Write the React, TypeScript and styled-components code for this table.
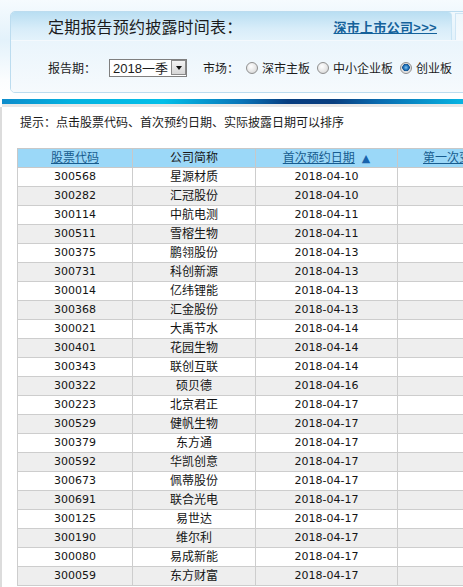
import React from "react";
import styled, { createGlobalStyle } from "styled-components";

const Global = createGlobalStyle`
  html, body { margin: 0; padding: 0; overflow: hidden; background: #fff; }
  body { font-family: "Liberation Sans", "Noto Sans CJK SC", sans-serif; color: #1a1a1a; }
`;

const Page = styled.div`
  width: 463px;
  height: 587px;
  overflow: hidden;
  display: flex;
  flex-direction: column;
`;

const Top = styled.div`
  padding: 11px 0 6px 10px;
  background: linear-gradient(#f6fbfe 0px, #e3f2fb 40px, #fbfdfe 80px, #ffffff 100%);
`;

const Panel = styled.div`
  width: 900px;
  border: 1px solid #bcdcef;
  border-radius: 5px;
  overflow: hidden;
  display: flex;
  flex-direction: column;
`;

const PanelHead = styled.div`
  display: flex;
  height: 28px;
  border-bottom: 1px solid #f4f9fd;
`;

const TitleArea = styled.div`
  width: 441px;
  box-sizing: border-box;
  display: flex;
  align-items: center;
  justify-content: space-between;
  padding: 0 14px 0 37px;
  background: linear-gradient(#b9def2, #d8edf9 60%, #e3f2fb);
  border-right: 1px solid #c8e4f4;
  border-top-right-radius: 4px;
`;

const Title = styled.span`
  font-size: 16px;
  color: #1c1c1c;
  letter-spacing: 0.2px;
`;

const MoreLink = styled.a`
  font-size: 13px;
  font-weight: bold;
  color: #15629b;
  text-decoration: underline;
  letter-spacing: 0.3px;
`;

const SideTab = styled.div`
  margin: 1px 0 0 3px;
  flex: 1;
  border: 1px solid #cfe6f5;
  border-bottom: none;
  background: linear-gradient(#eef7fc, #f5fafd);
`;

const PanelBody = styled.div`
  height: 51px;
  display: flex;
  align-items: center;
  padding: 2px 0 0 37px;
  box-sizing: border-box;
  background: linear-gradient(#eaf5fc, #f6fafd);
  font-size: 12px;
  color: #1c1c1c;
`;

const Label = styled.span<{ $gap: number }>`
  margin-right: ${(p) => p.$gap}px;
  white-space: nowrap;
`;

const Select = styled.div`
  width: 78px;
  height: 18px;
  box-sizing: border-box;
  border: 1px solid #7f7f7f;
  background: #fff;
  display: flex;
  align-items: center;
  justify-content: space-between;
  margin-right: 16px;
  font-size: 13px;
  padding-left: 3px;
`;

const SelectBtn = styled.span`
  width: 15px;
  height: 15px;
  box-sizing: border-box;
  border: 1px solid #8a8a8a;
  background: linear-gradient(#f4f4f4, #d6d6d6);
  display: flex;
  align-items: center;
  justify-content: center;
`;

const Arrow = styled.span`
  width: 0;
  height: 0;
  border-left: 3.5px solid transparent;
  border-right: 3.5px solid transparent;
  border-top: 4px solid #111;
  margin-top: 1px;
`;

const RadioItem = styled.label`
  display: flex;
  align-items: center;
  margin-right: 6px;
  font-size: 12px;
  white-space: nowrap;
`;

const RadioDot = styled.span<{ $on?: boolean }>`
  width: 12px;
  height: 12px;
  box-sizing: border-box;
  border-radius: 50%;
  border: 1px solid #8f8f8f;
  margin: 0 4px 0 1px;
  background: ${(p) =>
    p.$on
      ? "radial-gradient(circle at 50% 45%, #7fc4f0 0, #1d6fb8 2.5px, #14508a 3.5px, #dcdcdc 4px, #f5f5f5 100%)"
      : "radial-gradient(circle at 40% 35%, #ffffff 0, #e4e4e4 60%, #c9c9c9 100%)"};
`;

const BlueBar = styled.div`
  height: 5px;
  margin-left: 2px;
  background: linear-gradient(
    90deg,
    #0e8ccb 0%,
    #03b2e0 15%,
    #03bfe8 35%,
    #0a74b8 52%,
    #093e80 62%,
    #0a3f80 72%,
    #0a6cb0 82%,
    #07b4e2 100%
  );
`;

const GrayBand = styled.div`
  height: 3px;
  margin-left: 2px;
  background: #e8e8e8;
`;

const Main = styled.div`
  flex: 1;
  border-left: 2px solid #dcdcdc;
  padding: 9px 0 0 15px;
`;

const Tip = styled.div`
  font-size: 12px;
  line-height: 14px;
  padding-left: 3px;
  margin-bottom: 18px;
  color: #1a1a1a;
`;

const Table = styled.table`
  border-collapse: collapse;
  table-layout: fixed;
  width: 800px;
  font-size: 12px;
`;

const Th = styled.th<{ $w: number }>`
  width: ${(p) => p.$w}px;
  height: 18px;
  padding: 0;
  font-weight: normal;
  background: #9bd8f8;
  border: 1px solid #c8c8c8;
  line-height: 17px;
  text-align: center;
  color: #1a1a1a;
  white-space: nowrap;
`;

const SortLink = styled.a`
  color: #175c8f;
  text-decoration: underline;
`;

const SortMark = styled.span`
  font-family: "DejaVu Sans", sans-serif;
  font-size: 11px;
  margin-left: 7px;
  color: #1763ad;
  display: inline-block;
`;

const Tr = styled.tr<{ $alt: boolean }>`
  background: ${(p) => (p.$alt ? "#eeeeee" : "#ffffff")};
`;

const Td = styled.td<{ $num?: boolean }>`
  height: 18px;
  padding: 0;
  border: 1px solid #cdcdcd;
  text-align: center;
  line-height: 18px;
  color: #141414;
  white-space: nowrap;
  font-family: ${(p) =>
    p.$num ? '"DejaVu Sans", sans-serif' : '"Liberation Sans", "Noto Sans CJK SC", sans-serif'};
  font-size: ${(p) => (p.$num ? "11px" : "12px")};
`;

const rows: [string, string, string][] = [
  ["300568", "星源材质", "2018-04-10"],
  ["300282", "汇冠股份", "2018-04-10"],
  ["300114", "中航电测", "2018-04-11"],
  ["300511", "雪榕生物", "2018-04-11"],
  ["300375", "鹏翎股份", "2018-04-13"],
  ["300731", "科创新源", "2018-04-13"],
  ["300014", "亿纬锂能", "2018-04-13"],
  ["300368", "汇金股份", "2018-04-13"],
  ["300021", "大禹节水", "2018-04-14"],
  ["300401", "花园生物", "2018-04-14"],
  ["300343", "联创互联", "2018-04-14"],
  ["300322", "硕贝德", "2018-04-16"],
  ["300223", "北京君正", "2018-04-17"],
  ["300529", "健帆生物", "2018-04-17"],
  ["300379", "东方通", "2018-04-17"],
  ["300592", "华凯创意", "2018-04-17"],
  ["300673", "佩蒂股份", "2018-04-17"],
  ["300691", "联合光电", "2018-04-17"],
  ["300125", "易世达", "2018-04-17"],
  ["300190", "维尔利", "2018-04-17"],
  ["300080", "易成新能", "2018-04-17"],
  ["300059", "东方财富", "2018-04-17"],
];

export default function App() {
  return (
    <Page>
      <Global />
      <Top>
        <Panel>
          <PanelHead>
            <TitleArea>
              <Title>定期报告预约披露时间表：</Title>
              <MoreLink>深市上市公司&gt;&gt;&gt;</MoreLink>
            </TitleArea>
            <SideTab />
          </PanelHead>
          <PanelBody>
            <Label $gap={13}>报告期：</Label>
            <Select>
              <span>2018一季</span>
              <SelectBtn>
                <Arrow />
              </SelectBtn>
            </Select>
            <Label $gap={6}>市场：</Label>
            <RadioItem>
              <RadioDot />
              深市主板
            </RadioItem>
            <RadioItem>
              <RadioDot />
              中小企业板
            </RadioItem>
            <RadioItem>
              <RadioDot $on />
              创业板
            </RadioItem>
          </PanelBody>
        </Panel>
      </Top>
      <BlueBar />
      <GrayBand />
      <Main>
        <Tip>提示：点击股票代码、首次预约日期、实际披露日期可以排序</Tip>
        <Table>
          <thead>
            <tr>
              <Th $w={114}>
                <SortLink>股票代码</SortLink>
              </Th>
              <Th $w={122}>公司简称</Th>
              <Th $w={141}>
                <SortLink>首次预约日期</SortLink>
                <SortMark>▲</SortMark>
              </Th>
              <Th $w={134}>
                <SortLink>第一次变更日期</SortLink>
              </Th>
              <Th $w={289}></Th>
            </tr>
          </thead>
          <tbody>
            {rows.map((r, i) => (
              <Tr key={r[0]} $alt={i % 2 === 1}>
                <Td $num>{r[0]}</Td>
                <Td>{r[1]}</Td>
                <Td $num>{r[2]}</Td>
                <Td></Td>
                <Td></Td>
              </Tr>
            ))}
          </tbody>
        </Table>
      </Main>
    </Page>
  );
}
